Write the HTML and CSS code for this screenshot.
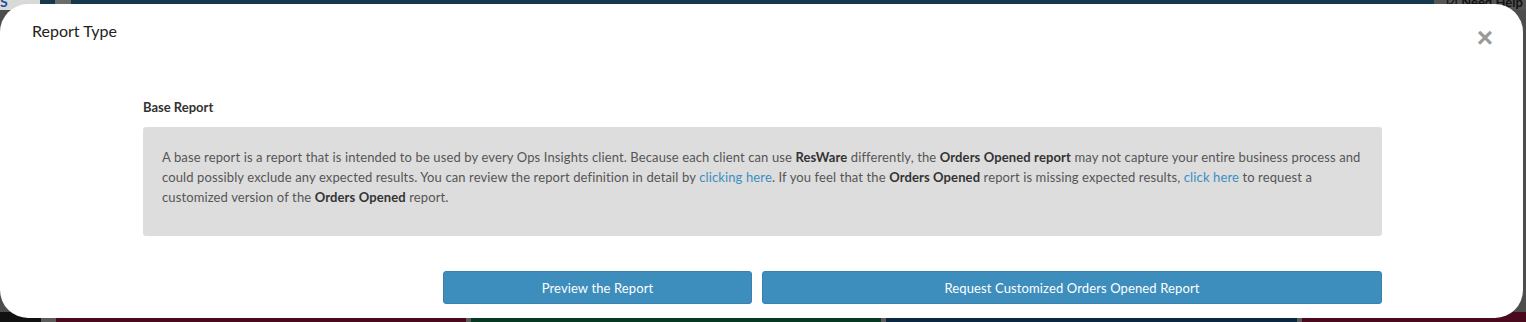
FILE: index.html
```html
<!DOCTYPE html>
<html lang="en">
<head>
    <meta charset="UTF-8">
    <meta name="viewport" content="width=device-width, initial-scale=1.0">
    <title>Report Type</title>
    <link rel="stylesheet" href="styles.css">
</head>
<body>

<div class="page">
    <div class="topbar">
        <span class="brand">S</span>
        <span class="nav-stub"></span>
        <span class="topbar-fill"></span>
        <span class="help">&#9745; Need Help</span>
    </div>
    <div class="page-body"></div>
    <div class="tiles">
        <span class="tile tile-black"></span>
        <span class="tile-gap"></span>
        <span class="tile tile-maroon"></span>
        <span class="tile-gap"></span>
        <span class="tile tile-green"></span>
        <span class="tile-gap"></span>
        <span class="tile tile-navy"></span>
        <span class="tile-gap"></span>
        <span class="tile tile-maroon"></span>
    </div>
</div>

<div class="modal">
    <div class="modal-header">
        <h4>Report Type</h4>
        <button class="close" aria-label="Close">&times;</button>
    </div>

    <div class="modal-body">
        <h5>Base Report</h5>
        <div class="well">
            A base report is a report that is intended to be used by every Ops Insights client. Because each client can use <b>ResWare</b> differently, the <b>Orders Opened report</b> may not capture your entire business process and<br>
            could possibly exclude any expected results. You can review the report definition in detail by <a href="#">clicking here</a>. If you feel that the <b>Orders Opened</b> report is missing expected results, <a href="#">click here</a> to request a<br>
            customized version of the <b>Orders Opened</b> report.
        </div>

        <div class="actions">
            <button class="btn btn-preview">Preview the Report</button>
            <button class="btn btn-request">Request Customized Orders Opened Report</button>
        </div>
    </div>
</div>

</body>
</html>
```

FILE: styles.css
```css
body {
    margin: 0;
    padding: 0;
    font-family: Lato, "Liberation Sans", sans-serif;
    background-color: #4d4d4d;
    height: 322px;
    overflow: hidden;
}

/* page behind the modal */
.page {
    height: 322px;
    display: flex;
    flex-direction: column;
}

.topbar {
    height: 10px;
    display: flex;
    background-color: #15384b;
}

.brand {
    width: 40px;
    background-color: #d9d9d9;
    color: #1f4f9a;
    font-weight: bold;
    font-size: 14px;
    line-height: 4px;
    overflow: hidden;
}

.nav-stub {
    width: 16px;
    margin-left: 15px;
    background-color: #6b6b6b;
}

.topbar-fill {
    flex: 1;
}

.help {
    width: 80px;
    background-color: #555;
    color: #111;
    font-size: 13px;
    font-weight: bold;
    line-height: 4px;
    overflow: hidden;
    padding-left: 12px;
}

.page-body {
    flex: 1;
}

.tiles {
    height: 10px;
    display: flex;
}

.tile-black {
    width: 41px;
    background-color: #111;
}

.tile-gap {
    width: 5px;
    background-color: #5b5b5b;
}

.tile-black + .tile-gap {
    width: 15px;
}

.tile-maroon {
    width: 410px;
    background-color: #4a0a1e;
}

.tile-green {
    width: 410px;
    background-color: #063822;
}

.tile-navy {
    width: 411px;
    background-color: #0b2640;
}

.tile:last-child {
    flex: 1;
}

/* modal */
.modal {
    position: absolute;
    top: 4px;
    left: 0;
    width: 1523px;
    height: 314px;
    background-color: #fff;
    border-radius: 28px;
    box-sizing: border-box;
}

.modal-header {
    display: flex;
    justify-content: space-between;
    align-items: flex-start;
    padding: 16px 32px 0 32px;
}

.modal-header h4 {
    margin: 0;
    font-size: 16px;
    font-weight: normal;
    color: #222;
    line-height: 22px;
}

.close {
    border: none;
    background: none;
    padding: 0;
    margin: 7px -2px 0 0;
    font-family: "Liberation Sans", sans-serif;
    font-size: 28px;
    line-height: 22px;
    font-weight: bold;
    color: #999;
    cursor: pointer;
}

.modal-body {
    padding: 0 141px 0 143px;
    margin-top: 50px;
}

.modal-body h5 {
    margin: 0 0 12px 0;
    font-size: 13px;
    font-weight: bold;
    color: #333;
    line-height: 16px;
}

.well {
    background-color: #dddddd;
    border-radius: 3px;
    padding: 20px 19px 29px 19px;
    font-size: 13px;
    line-height: 20px;
    letter-spacing: 0.12px;
    white-space: nowrap;
    color: #555;
}

.well b {
    color: #333;
}

.well a {
    color: #3b8ec2;
    text-decoration: none;
}

.actions {
    display: flex;
    justify-content: flex-end;
    gap: 10px;
    margin-top: 35px;
}

.btn {
    height: 33px;
    border: 1px solid #3782b0;
    border-radius: 3px;
    background-color: #3d8dbd;
    color: #fff;
    font-family: Lato, "Liberation Sans", sans-serif;
    font-size: 13px;
    letter-spacing: 0.12px;
    cursor: pointer;
}

.btn-preview {
    width: 309px;
}

.btn-request {
    width: 620px;
}
```
